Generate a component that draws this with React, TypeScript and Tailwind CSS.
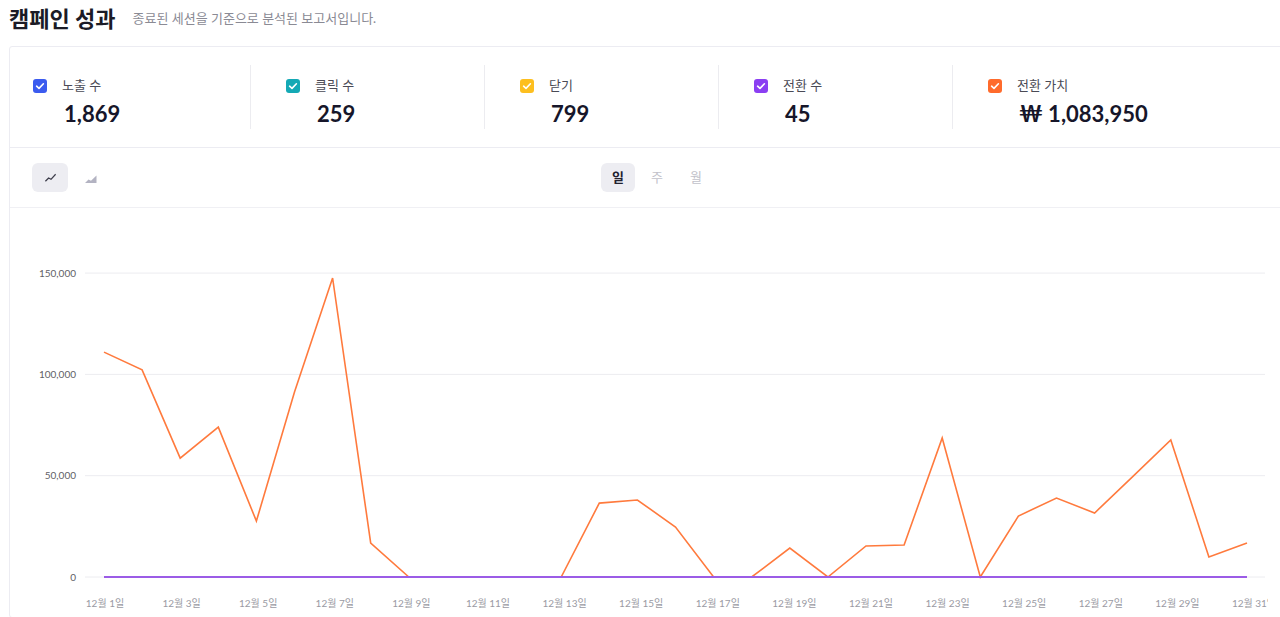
import React from 'react';

const FONT = "font-['Lato','Noto_Sans_CJK_KR',sans-serif]";

const stats = [
  { label: '노출 수', value: '1,869', color: 'bg-[#3b5bef]' },
  { label: '클릭 수', value: '259', color: 'bg-[#14a9b5]' },
  { label: '닫기', value: '799', color: 'bg-[#fdbf1f]' },
  { label: '전환 수', value: '45', color: 'bg-[#8b3ff2]' },
  { label: '전환 가치', value: '₩ 1,083,950', color: 'bg-[#ff6b2c]' },
];

// 전환 가치 per day, 12월 1일 ~ 31일
const values = [
  111000, 102200, 58700, 74000, 27600, 91300, 147600, 16800, 0, 0, 0, 0, 0,
  36500, 38000, 24700, 0, 0, 14300, 0, 15300, 15800, 68600, 0, 30100, 39000,
  31600, 49500, 67600, 9900, 16800,
];

// chart svg sits at page (10, 208)
const OX = 10;
const OY = 208;
const px = (d: number) => 104 + d * 38.1 - OX;
const py = (v: number) => 577 - (v / 50000) * 101.3 - OY;

function Check() {
  return (
    <svg viewBox="0 0 14 14" className="w-[14px] h-[14px]">
      <path d="M3.6 7.2 L6 9.4 L10.4 4.8" fill="none" stroke="white" strokeWidth="1.6" strokeLinecap="round" strokeLinejoin="round" />
    </svg>
  );
}

function Chart() {
  const orange = values.map((v, i) => `${px(i).toFixed(1)},${py(v).toFixed(1)}`).join(' ');
  const ticks = [0, 50000, 100000, 150000];
  const days = [1, 3, 5, 7, 9, 11, 13, 15, 17, 19, 21, 23, 25, 27, 29, 31];
  return (
    <svg width={1258} height={409} viewBox="0 0 1258 409" className="block">
      {ticks.map((t) => (
        <g key={t}>
          <line x1={85 - OX} x2={1265 - OX} y1={py(t)} y2={py(t)} stroke="#ececf0" strokeWidth={1} />
          <text x={76 - OX} y={py(t) + 3.5} textAnchor="end" fontSize={10} fill="#5f5f66" fontFamily="Lato, sans-serif">
            {t.toLocaleString('en-US')}
          </text>
        </g>
      ))}
      <polyline points={orange} fill="none" stroke="#ff7a3d" strokeWidth={1.6} strokeLinejoin="miter" />
      <line x1={px(0)} x2={px(30)} y1={py(0)} y2={py(0)} stroke="#9b5ce6" strokeWidth={2} />
      {days.map((d) => (
        <text key={d} x={105 + (d - 1) * 38.3 - OX} y={607 - OY} textAnchor="middle" fontSize={10} fill="#9a9aa3" fontFamily="Lato, 'Noto Sans CJK KR', sans-serif">
          {`12월 ${d}일`}
        </text>
      ))}
    </svg>
  );
}

export default function App() {
  return (
    <div className={`w-[1280px] h-[617px] overflow-hidden bg-white ${FONT}`}>
      {/* Header */}
      <div className="h-[36px] pl-[9px] flex items-center gap-[17px]">
        <h1 className="text-[22px] font-bold text-[#1b1b26]">캠페인 성과</h1>
        <span className="text-[13px] text-[#8a8a94] mt-[1px]">종료된 세션을 기준으로 분석된 보고서입니다.</span>
      </div>

      <div className="mt-[10px] ml-[9px] w-[1296px] border border-[#ececf2] rounded-[3px] bg-white">
        {/* Stats */}
        <div className="flex items-center h-[101px] border-b border-[#ececf2]">
          {stats.map((s, i) => (
            <div
              key={s.label}
              className={
                i === 0
                  ? 'w-[240px] pl-[23px] h-[64px] flex flex-col justify-between'
                  : 'w-[234px] pl-[35px] h-[64px] border-l border-[#ececf0] flex flex-col justify-between'
              }
            >
              <div className="flex items-center gap-[15px] mt-[11px]">
                <span className={`w-[14px] h-[14px] rounded-[3px] flex items-center justify-center ${s.color}`}>
                  <Check />
                </span>
                <span className="text-[13px] text-[#4a4a55]">{s.label}</span>
              </div>
              <div className="pl-[31px] text-[22px] leading-[26px] font-bold text-[#16162a] mb-[2px]">{s.value}</div>
            </div>
          ))}
        </div>

        {/* Toolbar */}
        <div className="grid grid-cols-[1fr_auto_1fr] items-center h-[60px] px-[22px] border-b border-[#f0f0f4]">
          <div className="flex items-center gap-[8px]">
            <button className="w-[36px] h-[29px] rounded-[6px] bg-[#ededf2] flex items-center justify-center">
              <svg viewBox="0 0 14 14" className="w-[13px] h-[13px]">
                <path d="M1.5 11 L5 7.5 L7.5 9 L12.5 3.5" fill="none" stroke="#3c3c4a" strokeWidth="1.3" strokeLinejoin="round" />
              </svg>
            </button>
            <button className="w-[30px] h-[29px] flex items-center justify-center">
              <svg viewBox="0 0 14 14" className="w-[14px] h-[14px]">
                <path d="M1 12 L4.5 8.5 L7 9.8 L12.5 4.5 L12.5 12 Z" fill="#b3b3c2" />
              </svg>
            </button>
          </div>
          <div className="flex items-center gap-[5px]">
            <button className="w-[34px] h-[29px] rounded-[6px] bg-[#ededf2] text-[13px] font-bold text-[#222230]">일</button>
            <button className="w-[34px] h-[29px] text-[13px] text-[#c2c2ca]">주</button>
            <button className="w-[34px] h-[29px] text-[13px] text-[#c2c2ca]">월</button>
          </div>
          <div />
        </div>

        {/* Chart */}
        <Chart />
      </div>
    </div>
  );
}
